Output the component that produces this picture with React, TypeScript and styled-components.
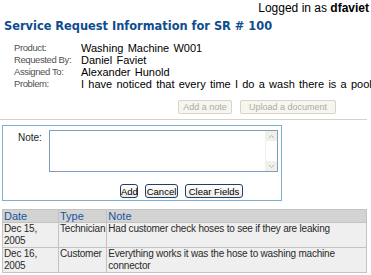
import * as React from "react"
import styled, { createGlobalStyle } from "styled-components"

const GlobalStyle = createGlobalStyle`
  body {
    margin: 0;
    background: #fff;
    font-family: "Liberation Sans", Arial, sans-serif;
    font-size: 11px;
    color: #000;
    overflow: hidden;
  }
`

const Page = styled.div`
  width: 371px;
  height: 275px;
  overflow: hidden;
`

const TopBar = styled.div`
  text-align: right;
  padding: 1px 2px 0 0;
  font-size: 12px;
  height: 15px;
  b {
    font-weight: bold;
  }
`

const Title = styled.h1`
  margin: 3px 0 0 4px;
  font-family: "DejaVu Sans", Verdana, sans-serif;
  font-size: 11.4px;
  font-weight: bold;
  color: #0f4c8f;
  height: 18px;
  line-height: 14px;
`

const InfoGrid = styled.div`
  display: grid;
  grid-template-columns: 67px max-content;
  padding: 5px 0 0 14px;
  white-space: nowrap;
`

const Label = styled.div`
  font-size: 9.5px;
  letter-spacing: -0.4px;
  color: #505050;
  line-height: 12px;
`

const Value = styled.div`
  font-size: 11px;
  word-spacing: 1.2px;
  line-height: 12px;
  color: #000;
`

const ActionBar = styled.div`
  display: flex;
  gap: 8px;
  padding: 10px 0 0 178px;
`

const PlainButton = styled.button<{ width: number }>`
  width: ${(p) => p.width}px;
  height: 14px;
  padding: 0;
  font-family: "Liberation Sans", Arial, sans-serif;
  font-size: 9px;
  color: #b0aca2;
  background: #f6f5f0;
  border: 1px solid #d9d4c6;
  border-radius: 2px;
`

const Divider = styled.div`
  margin: 5px 4px 0 0;
  height: 1px;
  background: #d5d2c6;
`

const NotePanel = styled.div`
  margin: 5px 0 0 2px;
  width: 278px;
  height: 74px;
  border: 1px solid #7db0cf;
  display: flex;
  flex-direction: column;
`

const NoteRow = styled.div`
  display: flex;
  padding: 4px 0 0 15px;
`

const NoteLabel = styled.div`
  width: 31px;
  font-size: 10px;
  color: #222;
  padding-top: 2px;
`

const TextBox = styled.div`
  width: 227px;
  height: 40px;
  border: 1px solid #7f9db9;
  display: flex;
  justify-content: flex-end;
  background: #fff;
`

const ScrollBar = styled.div`
  width: 11px;
  display: flex;
  flex-direction: column;
  justify-content: space-between;
  background: #fff;
  border-left: 1px solid #f0efea;
`

const ScrollArrow = styled.div`
  height: 10px;
  background: #f0efe8;
  display: flex;
  align-items: center;
  justify-content: center;
`

const FormButtons = styled.div`
  display: flex;
  gap: 7px;
  padding: 12px 0 0 117px;
`

const FormButton = styled.button<{ width: number }>`
  width: ${(p) => p.width}px;
  height: 14px;
  padding: 0;
  font-family: "Liberation Sans", Arial, sans-serif;
  font-size: 9.5px;
  color: #000;
  background: linear-gradient(#ffffff, #ecebe6);
  border: 1px solid #1f3f6f;
  border-radius: 3px;
`

const Table = styled.table`
  margin: 8px 0 0 2px;
  width: 365px;
  border-collapse: collapse;
  font-size: 10px;
  letter-spacing: -0.2px;
  td,
  th {
    border: 1px solid #c3c3c3;
    padding: 0 1px;
    text-align: left;
    vertical-align: top;
    line-height: 12px;
  }
`

const HeadCell = styled.th<{ width?: number }>`
  background: #d3d3d3;
  color: #16569b;
  font-weight: normal;
  font-size: 11px;
  letter-spacing: 0;
  height: 10px;
  ${(p) => (p.width ? `width: ${p.width}px;` : "")}
`

const Cell = styled.td`
  background: #efefef;
  color: #2a2a2a;
  height: 24px;
`

const BottomRule = styled.div`
  margin: 4px 4px 0 2px;
  height: 2px;
  background: #2b5a98;
`

function Arrow({ up }: { up?: boolean }) {
  return (
    <svg width="7" height="5" viewBox="0 0 7 5">
      <path
        d={up ? "M1 4 L3.5 1.5 L6 4" : "M1 1 L3.5 3.5 L6 1"}
        fill="none"
        stroke="#b8b6ae"
        strokeWidth="1"
      />
    </svg>
  )
}

const info = [
  ["Product:", "Washing Machine W001"],
  ["Requested By:", "Daniel Faviet"],
  ["Assigned To:", "Alexander Hunold"],
  ["Problem:", "I have noticed that every time I do a wash there is a pool of water under the machine"],
]

const notes = [
  {
    date: "Dec 15, 2005",
    type: "Technician",
    note: "Had customer check hoses to see if they are leaking",
  },
  {
    date: "Dec 16, 2005",
    type: "Customer",
    note: "Everything works it was the hose to washing machine connector",
  },
]

export default function App() {
  return (
    <Page>
      <GlobalStyle />
      <TopBar>
        Logged in as <b>dfaviet</b>
      </TopBar>
      <Title>Service Request Information for SR # 100</Title>
      <InfoGrid>
        {info.map(([label, value]) => (
          <React.Fragment key={label}>
            <Label>{label}</Label>
            <Value>{value}</Value>
          </React.Fragment>
        ))}
      </InfoGrid>
      <ActionBar>
        <PlainButton width={54} disabled>
          Add a note
        </PlainButton>
        <PlainButton width={96} disabled>
          Upload a document
        </PlainButton>
      </ActionBar>
      <Divider />
      <NotePanel>
        <NoteRow>
          <NoteLabel>Note:</NoteLabel>
          <TextBox>
            <ScrollBar>
              <ScrollArrow>
                <Arrow up />
              </ScrollArrow>
              <ScrollArrow>
                <Arrow />
              </ScrollArrow>
            </ScrollBar>
          </TextBox>
        </NoteRow>
        <FormButtons>
          <FormButton width={18}>Add</FormButton>
          <FormButton width={33}>Cancel</FormButton>
          <FormButton width={58}>Clear Fields</FormButton>
        </FormButtons>
      </NotePanel>
      <Table>
        <thead>
          <tr>
            <HeadCell width={53}>Date</HeadCell>
            <HeadCell width={45}>Type</HeadCell>
            <HeadCell>Note</HeadCell>
          </tr>
        </thead>
        <tbody>
          {notes.map((n) => (
            <tr key={n.date}>
              <Cell>{n.date}</Cell>
              <Cell>{n.type}</Cell>
              <Cell>{n.note}</Cell>
            </tr>
          ))}
        </tbody>
      </Table>
      <BottomRule />
    </Page>
  )
}
